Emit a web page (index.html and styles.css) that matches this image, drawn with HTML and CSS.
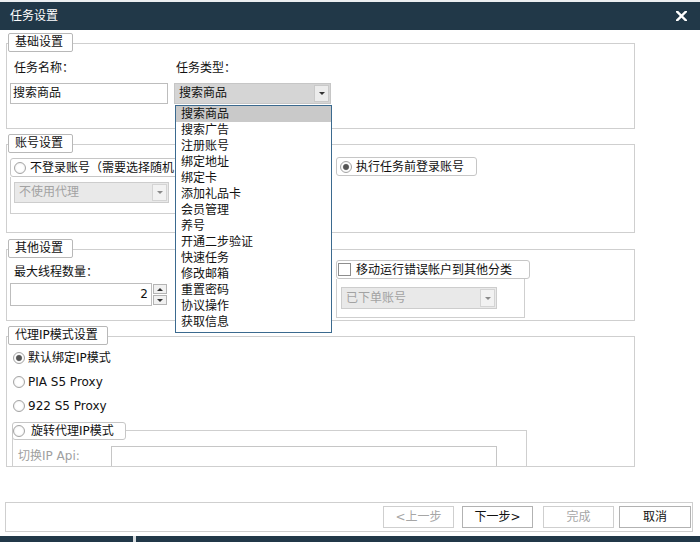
FILE: index.html
```html
<!DOCTYPE html>
<html lang="zh-CN">
<head>
<meta charset="utf-8">
<title>任务设置</title>
<link rel="stylesheet" href="styles.css">
</head>
<body>
<div class="window">
  <div class="topstrip"></div>
  <div class="titlebar">
    <span class="title">任务设置</span>
    <svg class="close" viewBox="0 0 11 10" width="11" height="10" aria-label="关闭">
      <path d="M1 0.5 L10 9.5 M10 0.5 L1 9.5" stroke="#fff" stroke-width="2.4" stroke-linecap="square" fill="none"/>
    </svg>
  </div>

  <div class="content">
    <section class="group g-basic">
      <div class="tab">基础设置</div>
      <div class="basic-grid">
        <div class="label">任务名称：</div>
        <div class="label l2">任务类型：</div>
        <div class="textbox">搜索商品</div>
        <div class="combo-wrap">
          <div class="combo selected">
            <span class="combo-text">搜索商品</span>
            <span class="combo-btn"><i class="arrow"></i></span>
          </div>
          <ul class="droplist">
            <li class="sel">搜索商品</li>
            <li>搜索广告</li>
            <li>注册账号</li>
            <li>绑定地址</li>
            <li>绑定卡</li>
            <li>添加礼品卡</li>
            <li>会员管理</li>
            <li>养号</li>
            <li>开通二步验证</li>
            <li>快速任务</li>
            <li>修改邮箱</li>
            <li>重置密码</li>
            <li>协议操作</li>
            <li>获取信息</li>
          </ul>
        </div>
      </div>
    </section>

    <section class="group g-account">
      <div class="tab">账号设置</div>
      <div class="row">
        <div class="col-left">
          <div class="rbox wide m5"><span class="radio"></span><span>不登录账号（需要选择随机</span></div>
          <div class="subbox sb-account">
            <div class="combo disabled w155">
              <span class="combo-text">不使用代理</span>
              <span class="combo-btn"><i class="arrow"></i></span>
            </div>
          </div>
        </div>
        <div class="col-right">
          <div class="rbox m4"><span class="radio on"></span><span>执行任务前登录账号</span></div>
        </div>
      </div>
    </section>

    <section class="group g-other">
      <div class="tab">其他设置</div>
      <div class="row">
        <div class="col-left">
          <div class="label mt6">最大线程数量：</div>
          <div class="spin">
            <div class="spin-input">2</div>
            <div class="spin-btns">
              <span class="spin-btn"><i class="up"></i></span>
              <span class="spin-btn"><i class="down"></i></span>
            </div>
          </div>
        </div>
        <div class="col-right">
          <div class="rbox cbox m2"><span class="check"></span><span>移动运行错误帐户到其他分类</span></div>
          <div class="subbox sb-other">
            <div class="combo disabled w156">
              <span class="combo-text">已下单账号</span>
              <span class="combo-btn"><i class="arrow"></i></span>
            </div>
          </div>
        </div>
      </div>
    </section>

    <section class="group g-proxy">
      <div class="tab">代理IP模式设置</div>
      <div class="proxy-body">
        <div class="rrow first"><span class="radio on"></span><span>默认绑定IP模式</span></div>
        <div class="rrow"><span class="radio"></span><span>PIA S5 Proxy</span></div>
        <div class="rrow"><span class="radio"></span><span>922 S5 Proxy</span></div>
        <div class="subgroup">
          <div class="rbox rot"><span class="radio"></span><span>旋转代理IP模式</span></div>
          <div class="api-row">
            <span class="api-label">切换IP Api:</span>
            <div class="api-input"></div>
          </div>
        </div>
      </div>
    </section>
  </div>

  <div class="footer">
    <button class="btn dis b1">&lt;上一步</button>
    <button class="btn b2">下一步&gt;</button>
    <button class="btn dis b3">完成</button>
    <button class="btn b4">取消</button>
  </div>
  <div class="bottomstrip"><span class="mark"></span></div>
</div>
</body>
</html>
```

FILE: styles.css
```css
* { box-sizing: border-box; margin: 0; padding: 0; }
html, body { width: 700px; height: 542px; overflow: hidden; }
body {
  font-family: "DejaVu Sans", "Noto Sans CJK SC", sans-serif;
  font-size: 12px;
  color: #111;
  background: #fff;
}
.window { width: 700px; height: 542px; display: flex; flex-direction: column; background: #fff; }
.topstrip { height: 2px; background: #eceff1; }
.titlebar {
  height: 28px; background: #213848; color: #fff;
  display: flex; align-items: center; justify-content: space-between;
  padding: 0 13px 0 10px;
}
.title { font-size: 12px; line-height: 16px; }
.close { display: block; }

.content { flex: 1; padding-left: 6px; display: flex; flex-direction: column; }

.group { width: 629px; border: 1px solid #cfcfcf; position: relative; }
.g-basic { margin-top: 13px; height: 86px; z-index: 5; }
.g-account { margin-top: 15px; height: 89px; }
.g-other { margin-top: 16px; height: 72px; }
.g-proxy { margin-top: 15px; height: 131px; }

.tab {
  display: block; width: max-content; height: 19px;
  margin: -11px 0 0 1px; padding: 0 9px 0 6px;
  border: 1px solid #b8b8b8; border-radius: 2px;
  background: #fff; line-height: 17px; position: relative;
}

.label { line-height: 16px; padding-left: 4px; }
.label.l2 { padding-left: 2px; }
.mt6 { margin-top: 6px; }

.basic-grid {
  display: grid; grid-template-columns: 158px 157px; grid-template-rows: 16px 21px;
  column-gap: 6px; row-gap: 7px; margin: 8px 0 0 3px;
}
.textbox { height: 21px; border: 1px solid #bdbdbd; padding-left: 2px; line-height: 19px; }

.combo-wrap { position: relative; }
.combo { display: flex; height: 21px; border: 1px solid #c6c6c6; }
.combo-text { flex: 1; padding-left: 4px; line-height: 19px; white-space: nowrap; overflow: hidden; }
.combo-btn {
  width: 15px; margin: 1px; border: 1px solid #c9c9c9; background: #ececec;
  display: flex; align-items: center; justify-content: center;
}
.arrow { display: block; width: 0; height: 0; border-left: 3px solid transparent; border-right: 3px solid transparent; border-top: 3px solid #333; }
.combo.selected { background: #d5d5d5; }
.combo.disabled { background: #e9e9e9; color: #a2a2a2; border-color: #cdcdcd; }
.combo.disabled .combo-btn { background: #f2f2f2; border-color: #d4d4d4; }
.combo.disabled .arrow { border-top-color: #8a8a8a; }
.w155 { width: 155px; height: 21px; }
.w156 { width: 156px; height: 22px; }
.w156 .combo-text { line-height: 20px; }

.droplist {
  position: absolute; left: 1px; top: calc(100% + 1px); width: 157px; z-index: 10;
  list-style: none; background: #fff; border: 1px solid #3b6a8f; padding-bottom: 2px;
}
.droplist li { height: 16px; line-height: 16px; padding-left: 5px; white-space: nowrap; }
.droplist li.sel { background: #c9c9c9; }

.row { display: flex; column-gap: 16px; margin-left: 3px; }
.col-left { width: 310px; }
.col-right { flex: 1; }

.rbox {
  display: flex; align-items: center; gap: 4px; width: max-content; height: 19px;
  border: 1px solid #c6c6c6; border-radius: 3px; padding: 0 12px 0 3px;
  background: #fff; line-height: 16px; white-space: nowrap;
}
.rbox.wide { width: 310px; }
.m5 { margin-top: 5px; }
.m4 { margin-top: 4px; }
.m2 { margin-top: 2px; }
.cbox { width: 194px; padding-left: 1px; gap: 5px; }

.radio {
  flex: none; width: 12px; height: 12px; border-radius: 50%;
  border: 1px solid #a4a4a4;
  background: radial-gradient(circle, #ffffff 0, #ffffff 45%, #e4e4e4 100%);
}
.radio.on {
  background: radial-gradient(circle, #555555 0, #555555 2.4px, #a0a0a0 3px, #ffffff 3.6px, #ececec 100%);
}
.check { flex: none; width: 13px; height: 13px; border: 1px solid #8e8e8e; background: #fff; }

.subbox { border: 1px solid #cfcfcf; border-top: none; }
.sb-account { height: 37px; padding: 5px 0 0 3px; }
.sb-other { width: 189px; height: 39px; padding: 8px 0 0 4px; }

.spin { display: flex; margin-top: 3px; height: 23px; }
.spin-input {
  width: 142px; height: 23px; border: 1px solid #bdbdbd; text-align: right;
  padding-right: 3px; line-height: 21px;
}
.spin-btns { width: 15px; display: flex; flex-direction: column; gap: 1px; padding: 1px 0 1px 1px; }
.spin-btn {
  flex: 1; border: 1px solid #b4b4b4; background: #f1f1f1;
  display: flex; align-items: center; justify-content: center;
}
.up { display: block; width: 0; height: 0; border-left: 3px solid transparent; border-right: 3px solid transparent; border-bottom: 3px solid #333; }
.down { display: block; width: 0; height: 0; border-left: 3px solid transparent; border-right: 3px solid transparent; border-top: 3px solid #333; }

.proxy-body { height: 121px; overflow: hidden; }
.rrow { display: flex; align-items: center; gap: 3px; height: 24px; padding-left: 6px; line-height: 16px; }
.rrow.first { margin-top: 1px; }

.subgroup { width: 515px; margin: 12px 0 0 5px; border: 1px solid #cfcfcf; height: 60px; }
.rbox.rot { margin: -9px 0 0 -1px; height: 18px; padding: 0 11px 0 0; gap: 6px; }
.api-row { display: flex; align-items: flex-start; margin-top: 6px; }
.api-label { width: 98px; padding-left: 5px; line-height: 20px; color: #a0a0a0; }
.api-input { width: 386px; height: 22px; border: 1px solid #c6c6c6; }

.footer {
  width: 688px; height: 30px; margin: 0 0 4px 5px;
  border: 1px solid #cfcfcf;
  display: flex; justify-content: flex-end; align-items: center; padding-right: 1px;
}
.btn {
  font: inherit; height: 22px; width: 71px; background: #fff; color: #111;
  border: 1px solid #b2b2b2; line-height: 20px; text-align: center;
}
.btn.dis { color: #a6a6a6; border-color: #cfcfcf; }
.b1 { margin-right: 8px; }
.b2 { margin-right: 10px; }
.b3 { margin-right: 5px; }
.b4 { width: 72px; }

.bottomstrip { height: 6px; background: #213848; padding-left: 133px; }
.mark { display: block; width: 3px; height: 6px; background: #d8dde0; }
```
